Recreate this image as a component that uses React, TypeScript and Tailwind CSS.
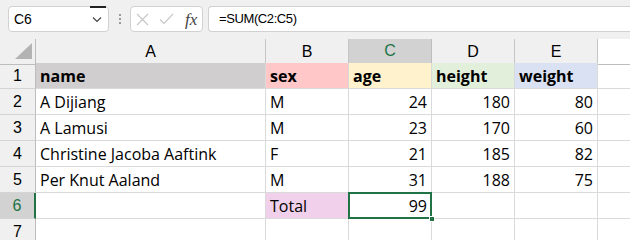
import React from 'react';

const cols = ['A', 'B', 'C', 'D', 'E'];

type Cell = { text?: string; bold?: boolean; right?: boolean; bg?: string };

const rows: Cell[][] = [
  [
    { text: 'name', bold: true, bg: 'bg-[#d0cece]' },
    { text: 'sex', bold: true, bg: 'bg-[#ffc7c7]' },
    { text: 'age', bold: true, bg: 'bg-[#fff2cc]' },
    { text: 'height', bold: true, bg: 'bg-[#e2efda]' },
    { text: 'weight', bold: true, bg: 'bg-[#d9e1f2]' },
  ],
  [{ text: 'A Dijiang' }, { text: 'M' }, { text: '24', right: true }, { text: '180', right: true }, { text: '80', right: true }],
  [{ text: 'A Lamusi' }, { text: 'M' }, { text: '23', right: true }, { text: '170', right: true }, { text: '60', right: true }],
  [{ text: 'Christine Jacoba Aaftink' }, { text: 'F' }, { text: '21', right: true }, { text: '185', right: true }, { text: '82', right: true }],
  [{ text: 'Per Knut Aaland' }, { text: 'M' }, { text: '31', right: true }, { text: '188', right: true }, { text: '75', right: true }],
  [{}, { text: 'Total', bg: 'bg-[#f0d0ea]' }, { text: '99', right: true }, {}, {}],
  [{}, {}, {}, {}, {}],
];

const gridCols = 'grid grid-cols-[36px_230px_83px_83px_83px_83px_1fr]';

export default function App() {
  return (
    <div className="w-[630px] h-[240px] overflow-hidden bg-[#f0f0f0] font-['Liberation_Sans',sans-serif] text-black">
      {/* formula bar */}
      <div className="h-[39px] pt-[6px] flex items-start">
        <div className="ml-[8px] w-[101px] h-[26px] bg-white border border-[#d1d1d1] rounded-[4px] flex items-center pl-[5px] text-[14px] relative">
          C6
          <div className="absolute right-[2px] top-[-1px] w-[16px] h-[2px] bg-[#222]" />
          <svg className="absolute right-[6px] top-[9px]" width="10" height="7" viewBox="0 0 10 7">
            <path d="M1 1.5 L5 5.5 L9 1.5" fill="none" stroke="#444" strokeWidth="1.2" />
          </svg>
        </div>
        <div className="w-[21px] h-[26px] flex flex-col items-center justify-center gap-[2px]">
          <span className="w-[2px] h-[2px] bg-[#9a9a9a]" />
          <span className="w-[2px] h-[2px] bg-[#9a9a9a]" />
          <span className="w-[2px] h-[2px] bg-[#9a9a9a]" />
        </div>
        <div className="w-[73px] h-[26px] bg-white border border-[#d1d1d1] rounded-[4px] flex items-center pl-[5px] gap-[10px]">
          <svg width="13" height="13" viewBox="0 0 13 13">
            <path d="M1 1 L12 12 M12 1 L1 12" stroke="#c6c6c6" strokeWidth="1.1" />
          </svg>
          <svg width="15" height="12" viewBox="0 0 15 12">
            <path d="M1 6.5 L5 10.5 L14 1" fill="none" stroke="#c6c6c6" strokeWidth="1.1" />
          </svg>
          <span className="font-['Liberation_Serif',serif] italic text-[17px] text-[#444] leading-none ml-[1px]">fx</span>
        </div>
        <div className="ml-[5px] flex-1 h-[26px] bg-white border border-r-0 border-[#d1d1d1] rounded-l-[4px] flex items-center pl-[10px] text-[13px] tracking-[-0.4px]">
          =SUM(C2:C5)
        </div>
      </div>

      {/* column headers */}
      <div className={`${gridCols} h-[24px]`}>
        <div className="relative border-r border-b border-[#bdbdbd]">
          <svg className="absolute left-[15px] top-[4px]" width="18" height="17" viewBox="0 0 18 17">
            <polygon points="17,0 17,16 0,16" fill="#b3b3b3" />
          </svg>
        </div>
        {cols.map((c) => (
          <div
            key={c}
            className={
              c === 'C'
                ? 'flex items-center justify-center bg-[#d2d2d2] border-r border-[#bdbdbd] border-b-2 border-b-[#217346] text-[#217346] text-[16px]'
                : 'flex items-center justify-center border-r border-b border-[#c6c6c6] border-b-[#bdbdbd] text-[16px]'
            }
          >
            {c}
          </div>
        ))}
        <div className="bg-white border-b border-[#bdbdbd]" />
      </div>

      {/* rows */}
      {rows.map((r, i) => (
        <div key={i} className={`${gridCols} h-[26px] bg-white`}>
          <div
            className={
              i === 5
                ? 'flex items-center justify-center bg-[#d2d2d2] border-r-2 border-r-[#217346] border-b border-[#d4d4d4] text-[#217346] text-[16px]'
                : 'flex items-center justify-center bg-[#f0f0f0] border-r border-r-[#bdbdbd] border-b border-[#d4d4d4] text-[16px]'
            }
          >
            {i + 1}
          </div>
          {r.map((cell, j) => (
            <div
              key={j}
              className={`relative flex items-end pb-[2px] px-[4px] font-['Open_Sans',sans-serif] text-[16px] leading-[20px] border-r border-b border-[#dadada] ${
                cell.right ? 'justify-end' : ''
              } ${cell.bold ? 'font-bold' : ''} ${cell.bg ?? ''} ${i === 5 && j === 2 ? 'z-10' : ''}`}
            >
              {cell.text}
              {i === 5 && j === 2 && (
                <>
                  <div className="absolute left-[-1px] top-[-1px] right-[-1px] bottom-[-1px] border-2 border-[#217346]" />
                  <div className="absolute right-[-4px] bottom-[-4px] w-[6px] h-[6px] bg-[#217346] border border-white" />
                </>
              )}
            </div>
          ))}
          <div className="border-b border-[#dadada]" />
        </div>
      ))}
    </div>
  );
}
